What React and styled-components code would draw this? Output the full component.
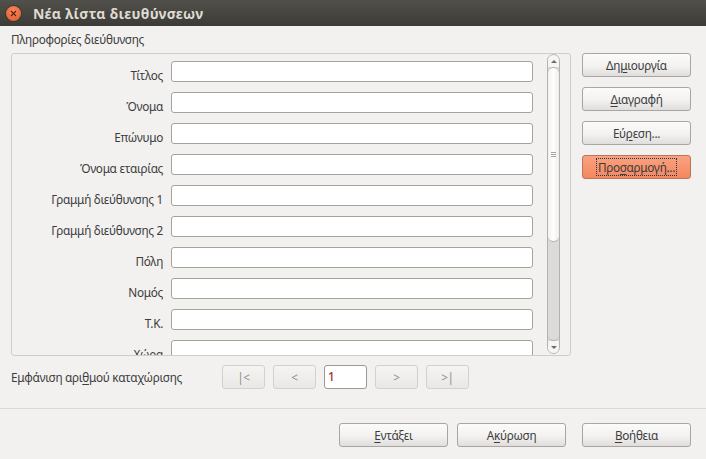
import React from "react";
import styled, { createGlobalStyle } from "styled-components";

const fields = [
  "Τίτλος",
  "Όνομα",
  "Επώνυμο",
  "Όνομα εταιρίας",
  "Γραμμή διεύθυνσης 1",
  "Γραμμή διεύθυνσης 2",
  "Πόλη",
  "Νομός",
  "Τ.Κ.",
  "Χώρα",
];

const App = () => {
  return (
    <Dialog>
      <GlobalStyle />
      <TitleBar>
        <CloseButton>
          <svg width="7" height="7" viewBox="0 0 7 7">
            <path d="M1 1l5 5M6 1L1 6" stroke="#5a2110" strokeWidth="1.1" />
          </svg>
        </CloseButton>
        <Title>Νέα λίστα διευθύνσεων</Title>
      </TitleBar>

      <Body>
        <Main>
          <GroupLabel>Πληροφορίες διεύθυνσης</GroupLabel>
          <Panel>
            <Fields>
              {fields.map((f) => (
                <Row key={f}>
                  <RowLabel>{f}</RowLabel>
                  <TextBox />
                </Row>
              ))}
            </Fields>
            <ScrollBar>
              <ScrollCap>
                <Arrow $up />
              </ScrollCap>
              <Thumb>
                <Grip />
              </Thumb>
              <Track />
              <ScrollCap>
                <Arrow />
              </ScrollCap>
            </ScrollBar>
          </Panel>
          <NavRow>
            <NavLabel>
              Εμφάνιση αρι<u>θ</u>μού καταχώρισης
            </NavLabel>
            <NavButton>|&lt;</NavButton>
            <NavButton>&lt;</NavButton>
            <NavInput>1</NavInput>
            <NavButton>&gt;</NavButton>
            <NavButton>&gt;|</NavButton>
          </NavRow>
        </Main>
        <Side>
          <Button>
            Δη<u>μ</u>ιουργία
          </Button>
          <Button>
            <u>Δ</u>ιαγραφή
          </Button>
          <Button>
            Εύ<u>ρ</u>εση...
          </Button>
          <HotButton>
            <Focus>
              Προ<u>σ</u>αρμογή...
            </Focus>
          </HotButton>
        </Side>
      </Body>

      <Separator />

      <Footer>
        <Button>
          <u>Ε</u>ντάξει
        </Button>
        <Button>
          Α<u>κ</u>ύρωση
        </Button>
        <HelpButton>
          <u>Β</u>οήθεια
        </HelpButton>
      </Footer>
    </Dialog>
  );
};

export default App;

const GlobalStyle = createGlobalStyle`
  html, body {
    margin: 0;
    padding: 0;
    background: #f2f1f0;
  }
  * {
    box-sizing: border-box;
  }
  u {
    text-underline-offset: 2px;
  }
`;

const Dialog = styled.div`
  width: 706px;
  height: 459px;
  overflow: hidden;
  background: #f2f1f0;
  color: #3c3c3c;
  font-family: "Noto Sans", "DejaVu Sans", sans-serif;
  font-size: 11.75px;
  letter-spacing: -0.29px;
`;

const TitleBar = styled.div`
  display: flex;
  align-items: center;
  height: 26px;
  padding-left: 6px;
  gap: 6px;
  background: linear-gradient(#52504a, #3c3b37);
`;

const CloseButton = styled.div`
  display: flex;
  align-items: center;
  justify-content: center;
  width: 15px;
  height: 15px;
  border-radius: 50%;
  background: radial-gradient(circle at 50% 35%, #f58a5e, #e2562a);
  box-shadow: 0 0 0 1px #3a3833;
`;

const Title = styled.div`
  margin-left: 6px;
  color: #dfdbd2;
  font-size: 14px;
  font-weight: 700;
  letter-spacing: 0.3px;
`;

const Body = styled.div`
  display: flex;
  gap: 11px;
  padding: 6px 15px 0 11px;
`;

const Main = styled.div`
  width: 560px;
`;

const GroupLabel = styled.div`
  height: 21px;
  line-height: 15px;
`;

const Panel = styled.div`
  display: flex;
  height: 303px;
  overflow: hidden;
  border: 1px solid #cfcdca;
  border-radius: 3px;
`;

const Fields = styled.div`
  display: flex;
  flex-direction: column;
  gap: 10px;
  width: 535px;
  height: 301px;
  padding-top: 7px;
  overflow: hidden;
`;

const Row = styled.div`
  display: flex;
  flex: none;
  height: 21px;
`;

const RowLabel = styled.div`
  width: 151px;
  padding-top: 6px;
  line-height: 16px;
  text-align: right;
`;

const TextBox = styled.div`
  width: 362px;
  height: 21px;
  margin-left: 8px;
  background: #fff;
  border: 1px solid #a6a29c;
  border-radius: 3px;
`;

const ScrollBar = styled.div`
  display: flex;
  flex-direction: column;
  width: 13px;
  height: 300px;
  background: #dcdbd9;
  border: 1px solid #b5b2ad;
  border-radius: 7px;
  overflow: hidden;
`;

const ScrollCap = styled.div`
  display: flex;
  flex: none;
  align-items: center;
  justify-content: center;
  height: 12px;
  background: #f6f5f4;
`;

const Arrow = styled.div`
  width: 0;
  height: 0;
  border-left: 3px solid transparent;
  border-right: 3px solid transparent;
  border-top: ${(p) => (p.$up ? "0" : "3px solid #6e6c68")};
  border-bottom: ${(p) => (p.$up ? "3px solid #6e6c68" : "0")};
`;

const Thumb = styled.div`
  display: flex;
  flex: none;
  align-items: center;
  justify-content: center;
  height: 175px;
  background: linear-gradient(90deg, #f4f3f2, #fdfdfc 50%, #eeedeb);
  border: 1px solid #b5b2ad;
  border-width: 1px 0;
  border-radius: 6px;
`;

const Grip = styled.div`
  width: 5px;
  height: 5px;
  border-top: 1px solid #a8a5a0;
  border-bottom: 1px solid #a8a5a0;
  background: linear-gradient(#a8a5a0, #a8a5a0) center / 100% 1px no-repeat;
`;

const Track = styled.div`
  flex: 1;
  border-bottom: 1px solid #b5b2ad;
  border-radius: 0 0 6px 6px;
`;

const NavRow = styled.div`
  display: flex;
  align-items: center;
  height: 24px;
  margin-top: 9px;
  gap: 8px;
`;

const NavLabel = styled.div`
  width: 204px;
  margin-right: -1px;
`;

const BaseButton = styled.div`
  display: flex;
  align-items: center;
  justify-content: center;
  width: 109px;
  height: 24px;
  border: 1px solid #a9a6a1;
  border-radius: 3px;
  background: linear-gradient(#fbfbfa, #f3f2f1 55%, #dfdedc);
  color: #3c3c3c;
`;

const Button = styled(BaseButton)``;

const HelpButton = styled(BaseButton)`
  margin-left: 7px;
`;

const HotButton = styled(BaseButton)`
  background: linear-gradient(#f9a280, #f5875f);
  border-color: #b8775c;
`;

const Focus = styled.span`
  padding: 0 1px;
  line-height: 16px;
  outline: 1px dotted #1f3a50;
`;

const NavButton = styled(BaseButton)`
  width: 43px;
  border-color: #d3d1ce;
  background: linear-gradient(#f5f4f3, #e9e8e6);
  color: #8f8d8a;
`;

const NavInput = styled.div`
  width: 43px;
  height: 24px;
  padding-left: 3px;
  line-height: 21px;
  background: #fff;
  border: 1px solid #9d9992;
  border-radius: 3px;
  color: #a03020;
  font-weight: 500;
`;

const Side = styled.div`
  display: flex;
  flex-direction: column;
  gap: 10px;
  padding-top: 21px;
`;

const Separator = styled.div`
  height: 1px;
  margin-top: 19px;
  background: #dad8d5;
`;

const Footer = styled.div`
  display: flex;
  justify-content: flex-end;
  gap: 9px;
  padding: 14px 15px 0 0;
`;
